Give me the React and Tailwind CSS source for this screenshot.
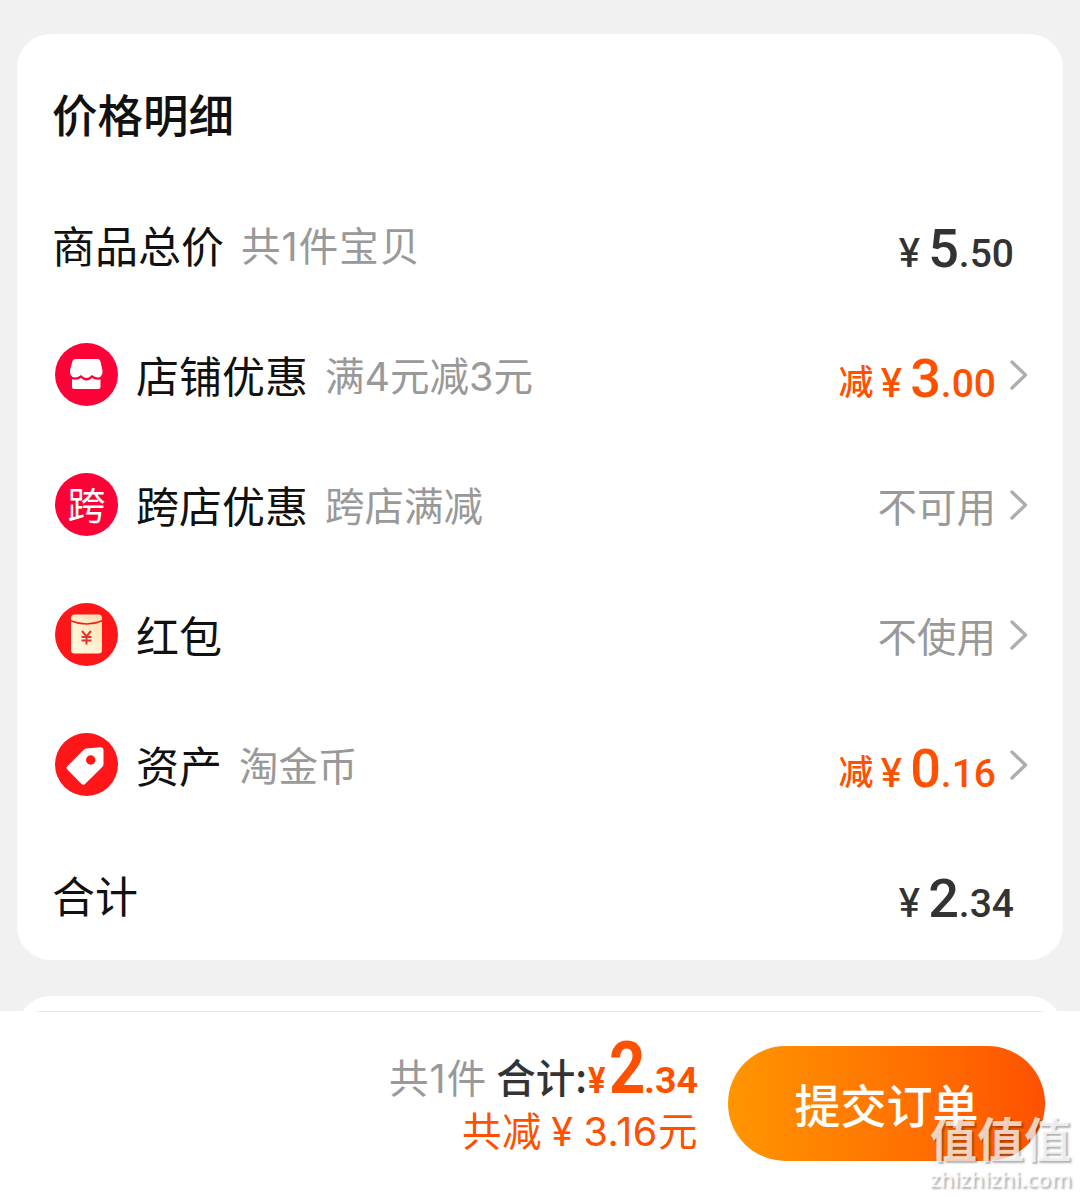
const YEN = "¥";

function Chevron() {
  return (
    <svg className="ml-3 h-[34px] w-[22px]" viewBox="0 0 22 34" fill="none">
      <path
        d="M4 4L17.5 17L4 30"
        stroke="#aeaeae"
        strokeWidth="3.4"
        strokeLinecap="round"
        strokeLinejoin="round"
      />
    </svg>
  );
}

function ShopIcon() {
  return (
    <svg className="h-[63px] w-[63px]" viewBox="0 0 63 63">
      <circle cx="31.5" cy="31.5" r="31.5" fill="#fc0236" />
      <path
        d="M20.500 16h22q2 0 2.800 2l2 8.500q.8 5-1.800 7v10.500q0 2-2 2h-24.500q-2 0-2-2v-10.500q-2.500-2-1.800-7l2.300-8.500q.8-2 3-2z"
        fill="#fff"
      />
      <path
        d="M14 34Q21 37.500 26 33.500Q31.500 39 37 33.500Q42 37.500 49 34"
        fill="none"
        stroke="#fc0236"
        strokeWidth="2.4"
      />
    </svg>
  );
}

function CrossIcon() {
  return (
    <div className="flex h-[63px] w-[63px] items-center justify-center rounded-full bg-[#fc0236] pb-[3px] text-[38px] leading-none text-white">
      跨
    </div>
  );
}

function RedPacketIcon() {
  return (
    <svg className="h-[63px] w-[63px]" viewBox="0 0 63 63">
      <defs>
        <linearGradient id="packet" x1="0" y1="1" x2="1" y2="0">
          <stop offset="0" stopColor="#fff8e0" />
          <stop offset=".5" stopColor="#fff1cd" />
          <stop offset="1" stopColor="#fbdcae" />
        </linearGradient>
      </defs>
      <circle cx="31.5" cy="31.5" r="31.5" fill="#fe1619" />
      <rect x="16" y="11.500" width="31" height="39" rx="3.500" fill="url(#packet)" />
      <path d="M15 17.500Q31.500 24.500 48 17.500" fill="none" stroke="#fe1619" strokeWidth="1.500" />
      <path
        d="M27 28l4.500 5.500L36 28M31.500 33.500V41.500M26.500 34h10M26.500 37.500h10"
        fill="none"
        stroke="#e8302a"
        strokeWidth="2"
      />
    </svg>
  );
}

function TagIcon() {
  return (
    <svg className="h-[63px] w-[63px]" viewBox="0 0 63 63">
      <circle cx="31.5" cy="31.5" r="31.5" fill="#fe1619" />
      <path
        d="M31 15.500L45 14.300Q48.500 14 48.500 17.500V31Q48.500 32.500 47.500 33.800L30 51Q28 52.800 26.300 50.800L12.300 36.500Q10.800 34.700 12.500 33L28.500 17Q29.500 15.800 31 15.500z"
        fill="#fff"
      />
      <circle cx="35.700" cy="27" r="4.700" fill="#fe1619" />
    </svg>
  );
}

function Amount({ whole, cents, prefix }) {
  return (
    <div className="flex items-baseline pt-[7px] font-['Roboto','Noto_Sans_CJK_SC',sans-serif] text-[39px] leading-none font-medium">
      {prefix && <span className="relative -top-0.5 mr-[7px] text-[35px]">{prefix}</span>}
      <span className="mr-2 font-['Inter',sans-serif] font-[450]">{YEN}</span>
      <span className="text-[54px]">{whole}</span>
      <span>{cents}</span>
    </div>
  );
}

const rows = [
  { label: "商品总价", note: "共1件宝贝", noteStyle: "tracking-[1.1px]", whole: "5", cents: ".50" },
  { icon: <ShopIcon />, label: "店铺优惠", note: "满4元减3元", prefix: "减", whole: "3", cents: ".00", link: true },
  { icon: <CrossIcon />, label: "跨店优惠", note: "跨店满减", status: "不可用", link: true },
  { icon: <RedPacketIcon />, label: "红包", status: "不使用", link: true },
  { icon: <TagIcon />, label: "资产", note: "淘金币", prefix: "减", whole: "0", cents: ".16", link: true },
  { label: "合计", whole: "2", cents: ".34" },
];

function Row({ row }) {
  return (
    <div className={`flex h-[130px] items-center ${row.link ? "pr-[33px] pl-9" : "pr-[49px] pl-[35px]"}`}>
      {row.icon && <div className="mr-[18px] ml-0.5 pb-0.5">{row.icon}</div>}
      <span className="pb-px text-[43px] leading-none text-[#111]">{row.label}</span>
      {row.note && (
        <span
          className={`ml-[17px] pt-1.5 font-['Inter','Noto_Sans_CJK_SC',sans-serif] text-[39.5px] leading-none text-[#999] ${row.noteStyle || ""}`}
        >
          {row.note}
        </span>
      )}
      <div className={`ml-auto flex items-center ${row.prefix ? "text-[#ff5000]" : "text-[#333]"}`}>
        {row.status ? (
          <span className="text-[39.5px] leading-none text-[#999]">{row.status}</span>
        ) : (
          <Amount whole={row.whole} cents={row.cents} prefix={row.prefix} />
        )}
        {row.link && <Chevron />}
      </div>
    </div>
  );
}

export default function App() {
  return (
    <div className="relative flex h-[1197px] w-[1080px] flex-col overflow-hidden bg-[#f1f1f1] font-['Noto_Sans_CJK_SC',sans-serif]">
      {/* Price details */}
      <section className="mx-[17px] mt-[34px] h-[926px] rounded-[34px] bg-white">
        <h1 className="flex h-[146px] items-center pt-[14px] pl-[35px] text-[45.500px] leading-none font-medium text-[#111]">
          价格明细
        </h1>
        {rows.map((row) => (
          <Row key={row.label} row={row} />
        ))}
      </section>

      {/* Next card, mostly under the bar */}
      <div className="mx-[17px] mt-9 h-[15px] shrink-0 overflow-hidden">
        <div className="h-20 rounded-[34px] bg-white" />
      </div>

      {/* Submit bar */}
      <footer className="flex h-[186px] shrink-0 flex-col bg-white">
        <div className="mx-9 h-px shrink-0 bg-[#ebebeb]" />
        <div className="flex flex-1 justify-end pr-[35px]">
          <div className="mr-[30px] flex flex-col items-end pt-[21px]">
            <div className="flex h-[72px] items-baseline text-[39.5px] leading-[72px]">
              <span className="font-['Inter','Noto_Sans_CJK_SC',sans-serif] tracking-[1.1px] text-[#999]">共1件</span>
              <span className="ml-[9px] font-medium text-[#333]">合计:</span>
              <span className="ml-px flex items-baseline font-['Roboto',sans-serif] text-[37.500px] font-bold text-[#ff5000]">
                <span className="w-[21px] origin-left scale-x-[.87]">{YEN}</span>
                <span className="w-[35px] origin-left scale-x-[.88] text-[72px]">2</span>
                <span>.34</span>
              </span>
            </div>
            <div className="pt-1 font-['Inter','Noto_Sans_CJK_SC',sans-serif] text-[39.5px] leading-[46px] tracking-[.6px] text-[#ff5000]">
              共减<span className="mr-2.5 ml-[9px]">{YEN}</span>3.16元
            </div>
          </div>
          <button className="mt-[34px] h-[115px] w-[317px] rounded-full bg-linear-to-r from-[#ff9500] to-[#ff5000] text-[46px] font-medium text-white">
            提交订单
          </button>
        </div>
      </footer>

      {/* Site mark */}
      <div className="absolute right-2 bottom-[7px] flex w-[143px] flex-col items-center text-white/75 [text-shadow:2px_2px_2px_rgb(0_0_0/0.3)]">
        <span className="mb-1 text-[47px] leading-[54px] font-bold">值值值</span>
        <span className="font-['Open_Sans',sans-serif] text-[21.800px] leading-[22px] font-semibold">zhizhizhi.com</span>
      </div>
    </div>
  );
}
